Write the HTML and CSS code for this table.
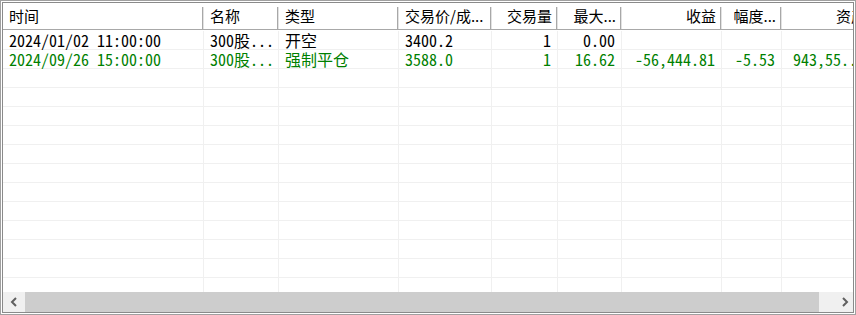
FILE: index.html
```html
<!DOCTYPE html>
<html lang="zh-CN">
<head>
<meta charset="utf-8">
<title>成交记录</title>
<link rel="stylesheet" href="styles.css">
</head>
<body>
<div class="frame">
  <div class="view">
    <div class="grid-area">
      <div class="row head">
        <div class="hcell">时间</div>
        <div class="hcell">名称</div>
        <div class="hcell">类型</div>
        <div class="hcell">交易价/成...</div>
        <div class="hcell r">交易量</div>
        <div class="hcell r">最大...</div>
        <div class="hcell r">收益</div>
        <div class="hcell r">幅度...</div>
        <div class="hcell r">资产</div>
        <div class="hcell"></div>
      </div>
      <div class="body">
        <div class="row">
          <div class="cell">2024/01/02 11:00:00</div>
          <div class="cell">300股...</div>
          <div class="cell">开空</div>
          <div class="cell">3400.2</div>
          <div class="cell r">1</div>
          <div class="cell r">0.00</div>
          <div class="cell r"></div>
          <div class="cell r"></div>
          <div class="cell r"></div>
          <div class="cell"></div>
        </div>
        <div class="row green">
          <div class="cell">2024/09/26 15:00:00</div>
          <div class="cell">300股...</div>
          <div class="cell">强制平仓</div>
          <div class="cell">3588.0</div>
          <div class="cell r">1</div>
          <div class="cell r">16.62</div>
          <div class="cell r">-56,444.81</div>
          <div class="cell r">-5.53</div>
          <div class="cell r">943,55...</div>
          <div class="cell"></div>
        </div>
        <div class="row"><div class="cell"></div><div class="cell"></div><div class="cell"></div><div class="cell"></div><div class="cell"></div><div class="cell"></div><div class="cell"></div><div class="cell"></div><div class="cell"></div><div class="cell"></div></div>
        <div class="row"><div class="cell"></div><div class="cell"></div><div class="cell"></div><div class="cell"></div><div class="cell"></div><div class="cell"></div><div class="cell"></div><div class="cell"></div><div class="cell"></div><div class="cell"></div></div>
        <div class="row"><div class="cell"></div><div class="cell"></div><div class="cell"></div><div class="cell"></div><div class="cell"></div><div class="cell"></div><div class="cell"></div><div class="cell"></div><div class="cell"></div><div class="cell"></div></div>
        <div class="row"><div class="cell"></div><div class="cell"></div><div class="cell"></div><div class="cell"></div><div class="cell"></div><div class="cell"></div><div class="cell"></div><div class="cell"></div><div class="cell"></div><div class="cell"></div></div>
        <div class="row"><div class="cell"></div><div class="cell"></div><div class="cell"></div><div class="cell"></div><div class="cell"></div><div class="cell"></div><div class="cell"></div><div class="cell"></div><div class="cell"></div><div class="cell"></div></div>
        <div class="row"><div class="cell"></div><div class="cell"></div><div class="cell"></div><div class="cell"></div><div class="cell"></div><div class="cell"></div><div class="cell"></div><div class="cell"></div><div class="cell"></div><div class="cell"></div></div>
        <div class="row"><div class="cell"></div><div class="cell"></div><div class="cell"></div><div class="cell"></div><div class="cell"></div><div class="cell"></div><div class="cell"></div><div class="cell"></div><div class="cell"></div><div class="cell"></div></div>
        <div class="row"><div class="cell"></div><div class="cell"></div><div class="cell"></div><div class="cell"></div><div class="cell"></div><div class="cell"></div><div class="cell"></div><div class="cell"></div><div class="cell"></div><div class="cell"></div></div>
        <div class="row"><div class="cell"></div><div class="cell"></div><div class="cell"></div><div class="cell"></div><div class="cell"></div><div class="cell"></div><div class="cell"></div><div class="cell"></div><div class="cell"></div><div class="cell"></div></div>
        <div class="row"><div class="cell"></div><div class="cell"></div><div class="cell"></div><div class="cell"></div><div class="cell"></div><div class="cell"></div><div class="cell"></div><div class="cell"></div><div class="cell"></div><div class="cell"></div></div>
        <div class="row"><div class="cell"></div><div class="cell"></div><div class="cell"></div><div class="cell"></div><div class="cell"></div><div class="cell"></div><div class="cell"></div><div class="cell"></div><div class="cell"></div><div class="cell"></div></div>
        <div class="row"><div class="cell"></div><div class="cell"></div><div class="cell"></div><div class="cell"></div><div class="cell"></div><div class="cell"></div><div class="cell"></div><div class="cell"></div><div class="cell"></div><div class="cell"></div></div>
      </div>
    </div>
    <div class="hscroll">
      <div class="sbtn left"><svg width="8" height="10" viewBox="0 0 8 10"><polyline points="6,1 2,5 6,9" fill="none" stroke="#606060" stroke-width="2"/></svg></div>
      <div class="thumb"></div>
      <div class="track"></div>
      <div class="sbtn right"><svg width="8" height="10" viewBox="0 0 8 10"><polyline points="2,1 6,5 2,9" fill="none" stroke="#606060" stroke-width="2"/></svg></div>
    </div>
  </div>
</div>
</body>
</html>
```

FILE: styles.css
```css
html, body {
  margin: 0;
  background: #ffffff;
}

.frame {
  width: 856px;
  height: 315px;
  box-sizing: border-box;
  border: 1px solid #a0a0a0;
  padding: 1px;
  background: #ffffff;
}

.view {
  height: 100%;
  box-sizing: border-box;
  border: 1px solid #8a8a8a;
  display: flex;
  flex-direction: column;
  overflow: hidden;
}

.grid-area {
  flex: 1;
  min-height: 0;
  overflow: hidden;
}

.row {
  display: grid;
  grid-template-columns: 201px 75px 120px 93px 66px 64px 100px 60px 90px 200px;
  width: max-content;
}

.head {
  height: 27px;
  box-sizing: border-box;
  border-bottom: 1px solid #a8a8a8;
}

.hcell {
  font-family: "Noto Sans CJK SC", "Noto Sans", sans-serif;
  font-size: 15px;
  line-height: 26px;
  color: #000000;
  padding: 0 0 0 6px;
  white-space: nowrap;
  background: linear-gradient(to right, #a8a8a8 0 1px, #e2e2e2 1px 2px) no-repeat right 0 top 4px / 2px 22px;
}

.body {
  padding-top: 1px;
}

.cell {
  height: 19px;
  box-sizing: border-box;
  border-right: 1px solid #f0f0f0;
  border-bottom: 1px solid #f0f0f0;
  font-family: "Noto Sans Mono CJK SC", "Noto Sans CJK SC", "Liberation Mono", monospace;
  font-size: 16px;
  line-height: 18px;
  color: #000000;
  padding: 0 0 0 6px;
  white-space: nowrap;
}

.r {
  text-align: right;
  padding: 0 6px 0 0;
}

.green .cell {
  color: #008000;
}

.hscroll {
  height: 20px;
  flex: none;
  display: flex;
  background: #f0f0f0;
}

.sbtn {
  display: flex;
  align-items: center;
  justify-content: center;
}

.sbtn.left {
  width: 22px;
}

.sbtn.right {
  width: 17px;
}

.thumb {
  width: 794px;
  background: #cdcdcd;
}

.track {
  flex: 1;
}
```
